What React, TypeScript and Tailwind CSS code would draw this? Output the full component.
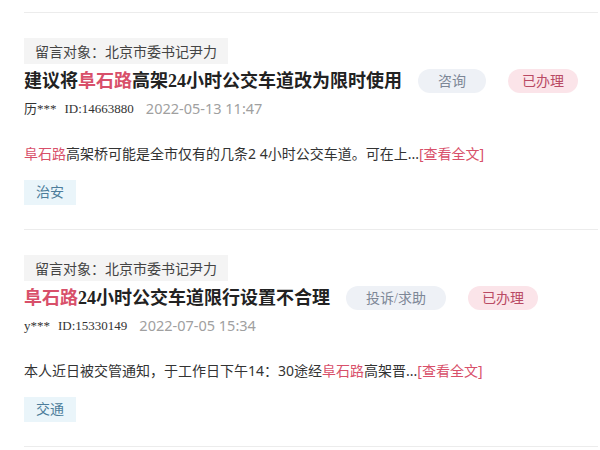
import React from 'react';

const serif = { fontFamily: '"Liberation Serif", "Noto Sans CJK SC", serif' };

type Item = {
  target: string;
  title: React.ReactNode;
  kind: string;
  status: string;
  user: string;
  id: string;
  date: string;
  body: React.ReactNode;
  tag: string;
};

const Hl = ({ children }: { children: React.ReactNode }) => (
  <span className="text-[#d8506a]">{children}</span>
);

const items: Item[] = [
  {
    target: '留言对象：北京市委书记尹力',
    title: (
      <>
        建议将<Hl>阜石路</Hl>高架24小时公交车道改为限时使用
      </>
    ),
    kind: '咨询',
    status: '已办理',
    user: '历***',
    id: 'ID:14663880',
    date: '2022-05-13 11:47',
    body: (
      <>
        <Hl>阜石路</Hl>高架桥可能是全市仅有的几条2 4小时公交车道。可在上...
      </>
    ),
    tag: '治安',
  },
  {
    target: '留言对象：北京市委书记尹力',
    title: (
      <>
        <Hl>阜石路</Hl>24小时公交车道限行设置不合理
      </>
    ),
    kind: '投诉/求助',
    status: '已办理',
    user: 'y***',
    id: 'ID:15330149',
    date: '2022-07-05 15:34',
    body: (
      <>
        本人近日被交管通知，于工作日下午14：30途经<Hl>阜石路</Hl>高架晋...
      </>
    ),
    tag: '交通',
  },
];

function MessageItem({ item }: { item: Item }) {
  return (
    <div className="flex flex-col items-start pt-[25px] pb-[24px] border-b border-[#ececec] whitespace-nowrap">
      <div className="h-[26px] px-[11px] flex items-center bg-[#f4f4f4] text-[14px] text-[#444]">
        {item.target}
      </div>
      <div className="mt-[5px] h-[24px] flex items-center">
        <span className="shrink-0 text-[18px] font-bold text-[#222] leading-none" style={serif}>
          {item.title}
        </span>
        <span
          className="shrink-0 ml-[16px] h-[24px] px-[20px] rounded-full bg-[#eef1f6] text-[#7d8796] text-[14px] flex items-center"
          style={serif}
        >
          {item.kind}
        </span>
        <span
          className="shrink-0 ml-[22px] h-[24px] px-[14px] rounded-full bg-[#fbe4e9] text-[#b94a64] text-[14px] flex items-center"
          style={serif}
        >
          {item.status}
        </span>
      </div>
      <div className="mt-[8px] h-[16px] flex items-center text-[13px]">
        <span className="text-[#333]" style={serif}>
          {item.user}
        </span>
        <span className="ml-[8px] text-[#333]" style={serif}>
          {item.id}
        </span>
        <span className="ml-[12px] text-[14.5px] text-[#a0a0a0]">{item.date}</span>
      </div>
      <div className="mt-[28px] h-[16px] flex items-center text-[14px] text-[#333]">
        <span>{item.body}</span>
        <span className="text-[#d8506a]">[查看全文]</span>
      </div>
      <div
        className="mt-[19px] h-[25px] px-[12px] flex items-center bg-[#eaf5fa] text-[#4d7d9b] text-[14px]"
        style={serif}
      >
        {item.tag}
      </div>
    </div>
  );
}

export default function App() {
  return (
    <div
      className="w-[600px] h-[450px] bg-white overflow-hidden pl-[24px] pr-[2px] pt-[12px]"
      style={{ fontFamily: '"Noto Sans", "Noto Sans CJK SC", sans-serif' }}
    >
      <div className="border-t border-[#ececec]">
        {items.map((item, i) => (
          <MessageItem key={i} item={item} />
        ))}
      </div>
    </div>
  );
}
